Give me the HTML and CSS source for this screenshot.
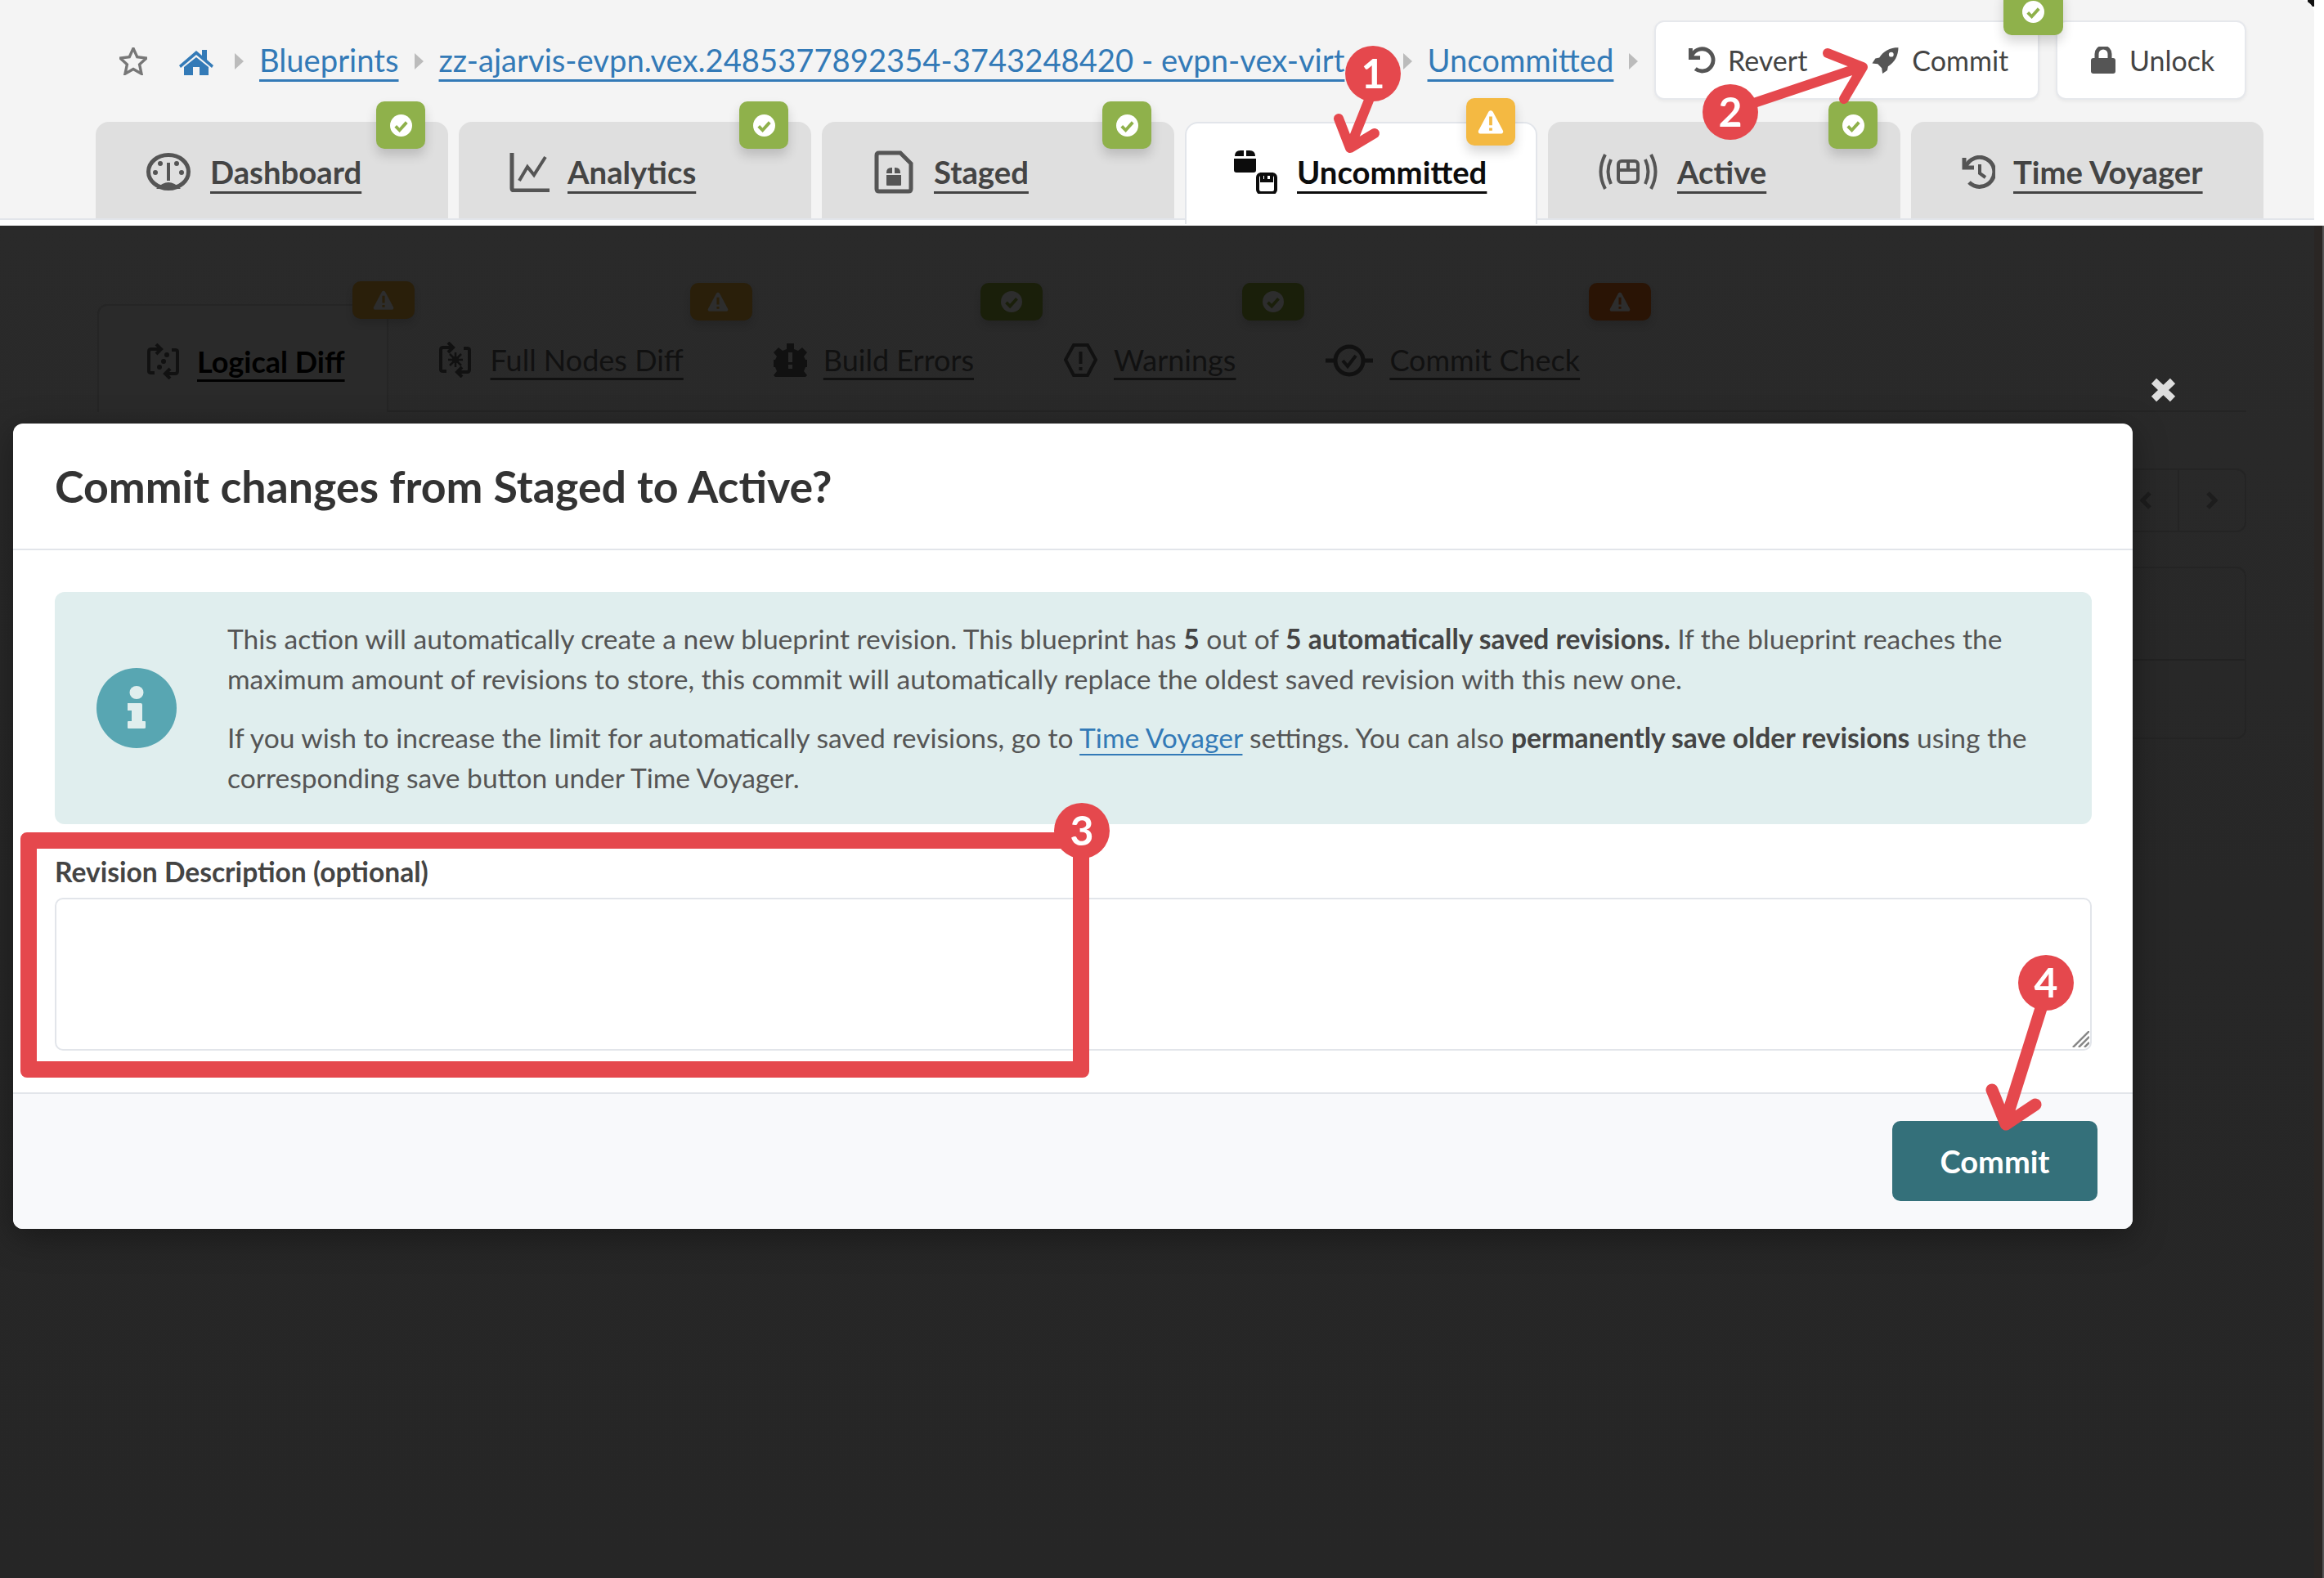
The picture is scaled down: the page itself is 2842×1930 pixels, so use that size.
FILE: index.html
```html
<!DOCTYPE html>
<html lang="en">
<head>
    <meta charset="UTF-8">
    <title>Commit changes</title>
    <link rel="stylesheet" href="styles.css">
</head>
<body>
    <svg class="sprite" width="0" height="0">
        <symbol id="ok" viewBox="0 0 28 28">
            <circle cx="14" cy="14" r="14" fill="currentColor"/>
            <path d="M7 15l5 5 9-10" fill="none" stroke="var(--mark)" stroke-width="4"/>
        </symbol>
        <symbol id="warn" viewBox="0 0 30 28">
            <path d="M15 1c1 0 2 .6 2.500 1.500L29 24c.8 1.700-.2 3.500-2 3.500H3c-1.800 0-2.800-1.800-2-3.500L12.500 2.500C13 1.600 14 1 15 1z" fill="currentColor"/>
            <path d="M15 8v10M15 21v3" fill="none" stroke="var(--mark)" stroke-width="3.500"/>
        </symbol>
    </svg>

    <div class="header-wrap">
        <header class="topbar">
            <div class="top-row">
                <nav class="crumbs">
                    <svg class="star" viewBox="2 2 30 30"><path d="M17 3l4.200 9.400 10 1.100-7.500 6.800 2.100 10.100L17 25.300l-8.800 5.100 2.100-10.100-7.500-6.800 10-1.100z"/></svg>
                    <a class="home" href="#"><svg viewBox="0 0 44 33"><path d="M22 3L1 21l2 3L22 8l19 16 2-3-8-7V2h-6v7z"/><path d="M22 11L7 23v10h11V23h8v10h11V23z"/></svg></a>
                    <span class="caret"></span>
                    <a href="#">Blueprints</a>
                    <span class="caret"></span>
                    <a class="crumb-long" href="#">zz-ajarvis-evpn.vex.2485377892354-3743248420 - evpn-vex-virt</a>
                    <span class="caret"></span>
                    <a href="#">Uncommitted</a>
                    <span class="caret"></span>
                </nav>
                <div class="actions">
                    <div class="btn-group">
                        <button class="top-btn">
                            <svg class="ic-undo" viewBox="0 0 34 34"><path d="M3 2v12h12" class="solid-line"/><path d="M4 13A14 14 0 1 1 9 28" class="line"/></svg>
                            Revert
                        </button>
                        <button class="top-btn">
                            <svg class="ic-rocket" viewBox="0 0 34 34"><path fill-rule="evenodd" d="M33 1C22 1 14 6 9 14l-5 1-4 6 7 1 5 5 1 7 6-4 1-5c8-5 13-13 13-25zM24 7a3 3 0 1 1 0 6 3 3 0 0 1 0-6z"/></svg>
                            Commit
                        </button>
                        <span class="badge ok group-badge"><svg><use href="#ok"/></svg></span>
                    </div>
                    <button class="top-btn solo">
                        <svg class="ic-lock" viewBox="0 0 30 33"><path d="M7 15V9a8 8 0 0 1 16 0v6" class="line"/><rect y="14" width="30" height="19" rx="3"/></svg>
                        Unlock
                    </button>
                </div>
            </div>

            <div class="tabs">
                <a class="tab" href="#">
                    <svg class="ic-gauge" viewBox="0 0 54 46"><ellipse cx="27" cy="23" rx="24.500" ry="20.500" class="line"/><path d="M12 44q15-16 30 0z"/><path d="M27 34V12" class="line thin"/><circle cx="11" cy="24" r="3"/><circle cx="17" cy="13" r="3"/><circle cx="37" cy="13" r="3"/><circle cx="43" cy="24" r="3"/></svg>
                    <span>Dashboard</span>
                    <span class="badge ok"><svg><use href="#ok"/></svg></span>
                </a>
                <a class="tab" href="#">
                    <svg class="ic-chart" viewBox="0 0 49 49"><path d="M3 1v43q0 3 3 3h43" class="line"/><path d="M12 35l10-17 8 10L44 6" class="line thin"/></svg>
                    <span>Analytics</span>
                    <span class="badge ok"><svg><use href="#ok"/></svg></span>
                </a>
                <a class="tab" href="#">
                    <svg class="ic-doc" viewBox="0 0 48 53"><path d="M7 3h25l13 13v31q0 3-3 3H6q-3 0-3-3V6q0-3 3-3z" class="line"/><path d="M15 27q0-6 6-6h1v7h-7zM25 21h1q6 0 6 6v1h-7zM15 30h18v12q0 1-1 1H16q-1 0-1-1z"/></svg>
                    <span>Staged</span>
                    <span class="badge ok"><svg><use href="#ok"/></svg></span>
                </a>
                <a class="tab active" href="#">
                    <svg class="ic-boxes" viewBox="0 0 53 53"><path d="M1 7q0-7 7-7h4v7zM15 0h4q7 0 7 7H15zM0 10h27v14q0 3-3 3H3q-3 0-3-3z"/><rect x="29" y="29" width="22" height="23" rx="4" class="line thin"/><path d="M34 29h12v8H34z M39 29v8" class="line thin"/></svg>
                    <span>Uncommitted</span>
                    <span class="badge warning"><svg><use href="#warn"/></svg></span>
                </a>
                <a class="tab" href="#">
                    <svg class="ic-live" viewBox="0 0 72 46"><path d="M8 2Q-3 23 8 44M15 8q-7 15 0 30M64 2q11 21 0 42M57 8q7 15 0 30" class="line thin"/><rect x="24" y="10" width="24" height="26" rx="4" class="line thin"/><path d="M24 21h24M36 10v11" class="line thin"/></svg>
                    <span>Active</span>
                    <span class="badge ok"><svg><use href="#ok"/></svg></span>
                </a>
                <a class="tab" href="#">
                    <svg class="ic-history" viewBox="0 0 41 41"><path d="M3 3v12h12" class="solid-line"/><path d="M5 14A18 18 0 1 1 9 33" class="line"/><path d="M22 11v11l7 5" class="line thin"/></svg>
                    <span>Time Voyager</span>
                </a>
            </div>
        </header>
    </div>

    <main class="dim">
        <div class="dim-page">
            <div class="ghost-tabs">
                <a class="ghost-tab current" href="#">
                    <svg class="gi-diff" viewBox="0 0 39 44"><path d="M15 7H5q-3 0-3 3v24q0 2 3 2h4M24 37h10q3 0 3-3V10q0-2-3-2h-4M11 1l6 6-6 6M28 31l-6 6 6 6" class="line thin"/><circle cx="24" cy="14" r="3"/><circle cx="20" cy="22" r="3"/><circle cx="15" cy="29" r="3"/></svg>
                    <span class="ghost-label">Logical Diff<span class="badge g-warn"><svg><use href="#warn"/></svg></span></span>
                </a>
                <a class="ghost-tab" href="#">
                    <svg class="gi-diff" viewBox="0 0 39 44"><path d="M15 7H5q-3 0-3 3v24q0 2 3 2h4M24 37h10q3 0 3-3V10q0-2-3-2h-4M11 1l6 6-6 6M28 31l-6 6 6 6" class="line thin"/><circle cx="20" cy="22" r="4"/><path d="M20 13v18M11 22h18M13 15l14 14M27 15L13 29" class="line hair"/></svg>
                    <span class="ghost-label">Full Nodes Diff<span class="badge g-warn"><svg><use href="#warn"/></svg></span></span>
                </a>
                <a class="ghost-tab" href="#">
                    <svg class="gi-gear" viewBox="0 0 41 41"><path fill-rule="evenodd" d="M16 0h9v7l5 2 5-4 6 6-4 5 2 4h2v9h-2l-2 5 4 5-6 6-5-4-5 2v-2h-9v2l-5-2-5 4-6-6 4-5-2-5H0v-9h2l2-4-4-5 6-6 5 4 5-2zM18 11v12h5V11zM18 26v5h5v-5z"/></svg>
                    <span class="ghost-label">Build Errors<span class="badge g-ok"><svg><use href="#ok"/></svg></span></span>
                </a>
                <a class="ghost-tab" href="#">
                    <svg class="gi-hex" viewBox="0 0 41 41"><path d="M12 2h17l10 18-10 19H12L2 20z" class="line thin"/><path d="M20.500 10v15M20.500 29v4" class="line thin"/></svg>
                    <span class="ghost-label">Warnings<span class="badge g-ok"><svg><use href="#ok"/></svg></span></span>
                </a>
                <a class="ghost-tab" href="#">
                    <svg class="gi-check" viewBox="0 0 58 41"><circle cx="29" cy="21" r="17" class="line"/><path d="M0 21h10M48 21h10" class="line"/><path d="M21 21l6 7 10-13" class="line thin"/></svg>
                    <span class="ghost-label">Commit Check<span class="badge g-err"><svg><use href="#warn"/></svg></span></span>
                </a>
            </div>
            <div class="pager">
                <span class="pager-cell"><svg viewBox="0 0 14 22"><path d="M12 2L3 11l9 9" class="line"/></svg></span>
                <span class="pager-cell"><svg viewBox="0 0 14 22"><path d="M2 2l9 9-9 9" class="line"/></svg></span>
            </div>
            <div class="ghost-panel">
                <div class="ghost-panel-row"></div>
                <div class="ghost-panel-row"></div>
            </div>
        </div>
        <div class="edge"></div>

        <svg class="close-x" viewBox="0 0 33 32"><path d="M5 5l23 22M28 5L5 27"/></svg>

        <section class="modal">
            <div class="modal-head">
                <h2>Commit changes from Staged to Active?</h2>
            </div>
            <div class="modal-body">
                <div class="info">
                    <svg class="info-ic" viewBox="0 0 98 98"><circle cx="49" cy="49" r="49"/><ellipse class="glyph" cx="49" cy="30" rx="8.500" ry="8"/><path class="glyph" d="M38 43h16q2 0 2 2v20h3q1 0 1 1v7q0 1-2 1H39q-1 0-1-1v-7q0-1 1-1h4V52h-5z"/></svg>
                    <div class="info-text">
                        <p>This action will automatically create a new blueprint revision. This blueprint has <strong>5</strong> out of <strong>5 automatically saved revisions.</strong> If the blueprint reaches the maximum amount of revisions to store, this commit will automatically replace the oldest saved revision with this new one.</p>
                        <p>If you wish to increase the limit for automatically saved revisions, go to <a href="#">Time Voyager</a> settings. You can also <strong>permanently save older revisions</strong> using the corresponding save button under Time Voyager.</p>
                    </div>
                </div>
                <label class="field-label" for="revDesc">Revision Description (optional)</label>
                <div class="field">
                    <textarea id="revDesc"></textarea>
                    <svg class="grip" viewBox="0 0 21 20"><path d="M1 20L21 0M8 20L21 7M15 20l6-6"/></svg>
                </div>
            </div>
            <div class="modal-foot">
                <button class="primary">Commit</button>
            </div>
        </section>
    </main>

    <!-- red callouts drawn on top of the screenshot -->
    <div class="callout-box"></div>
    <svg class="callouts" viewBox="0 0 2842 1930">
        <path d="M1675 120L1651 180M1637 145l14 36 30-18"/>
        <path d="M2130 131L2276 82M2235 65l43 17-23 39"/>
        <path class="heavy" d="M2497 1230L2453 1370M2436 1333l17 42 36-24"/>
        <circle cx="1679" cy="90" r="34"/>
        <circle cx="2116" cy="137" r="34"/>
        <circle cx="1323" cy="1016" r="34"/>
        <circle cx="2502" cy="1202" r="34"/>
        <text x="1679" y="108">1</text>
        <text x="2116" y="155">2</text>
        <text x="1323" y="1034">3</text>
        <text x="2502" y="1220">4</text>
    </svg>
</body>
</html>
```

FILE: styles.css
```css
* {
    box-sizing: border-box;
}
body {
    margin: 0;
    width: 2842px;
    height: 1930px;
    overflow: hidden;
    position: relative;
    background: #fff;
    font-family: Lato, "Open Sans", sans-serif;
    color: #555;
}
a {
    color: inherit;
}
.sprite {
    position: absolute;
}
.line {
    fill: none;
    stroke: currentColor;
    stroke-width: 5;
}
.line.thin {
    stroke-width: 4;
}
.line.hair {
    stroke-width: 2.5;
}
.solid-line {
    fill: none;
    stroke: currentColor;
    stroke-width: 5;
}

/* top bar */
.header-wrap {
    width: 2830px;
    height: 276px;
    position: relative;
}
.header-wrap::before {
    content: "";
    position: absolute;
    top: 0;
    right: 0;
    width: 8px;
    height: 8px;
    background: #111;
}
.topbar {
    position: relative;
    height: 269px;
    background: #f4f4f4;
    border-bottom: 2px solid #e2e5ea;
    border-top-right-radius: 16px;
}
.top-row {
    display: flex;
    justify-content: space-between;
    align-items: center;
    height: 122px;
    padding: 25px 83px 0 146px;
}
.crumbs {
    display: flex;
    align-items: center;
    gap: 17px;
    font-size: 38.200px;
    color: #337ab7;
    margin-top: 3px;
}
.crumbs a {
    display: block;
    height: 62px;
    padding-top: 2px;
    text-decoration: underline;
    text-decoration-thickness: 3px;
    text-underline-offset: 9px;
    line-height: 54px;
    white-space: nowrap;
}
.star {
    width: 34px;
    height: 34px;
    margin-right: 21px;
    fill: none;
    stroke: #777;
    stroke-width: 3;
}
.crumbs .home {
    height: 33px;
    padding-top: 0;
    margin-right: 6px;
}
.home svg {
    width: 44px;
    height: 33px;
    display: block;
    fill: #337ab7;
}
.caret {
    width: 0;
    height: 0;
    border-left: 11px solid #bbb;
    border-top: 10px solid transparent;
    border-bottom: 10px solid transparent;
    margin: 0 2px;
}
.crumbs .crumb-long {
    width: 1160px;
}
.actions {
    display: flex;
    gap: 20px;
}
.btn-group {
    position: relative;
    display: flex;
    gap: 79px;
    width: 471px;
    height: 97px;
    padding: 0 39px 0 39px;
    background: #fff;
    border: 2px solid #e6e8ec;
    border-radius: 12px;
    box-shadow: 0 2px 4px rgba(0, 0, 0, .05);
}
.top-btn {
    display: flex;
    align-items: center;
    gap: 15px;
    padding: 0;
    border: 0;
    background: none;
    font: 34px Lato, sans-serif;
    color: #444;
}
.top-btn svg {
    flex: none;
    fill: #555;
    color: #555;
    height: 33px;
}
.top-btn.solo {
    width: 233px;
    height: 97px;
    gap: 17px;
    padding: 0 0 0 41px;
    background: #fff;
    border: 2px solid #e6e8ec;
    border-radius: 12px;
    box-shadow: 0 2px 4px rgba(0, 0, 0, .05);
}
.ic-undo, .ic-rocket {
    width: 34px;
}
.ic-lock {
    width: 30px;
}

.tabs {
    display: flex;
    gap: 13px;
    margin-top: 27px;
    padding-left: 117px;
}
.tab {
    position: relative;
    display: flex;
    align-items: center;
    gap: 24px;
    width: 431px;
    height: 118px;
    padding: 4px 0 0 62px;
    background: #dfdfdf;
    border-radius: 16px 16px 0 0;
    font-size: 38.300px;
    font-weight: 700;
    color: #444;
    text-decoration: none;
}
.tab span:not(.badge) {
    text-decoration: underline;
    text-decoration-thickness: 3px;
    text-underline-offset: 9px;
}
.tab svg {
    flex: none;
    color: #555;
    fill: #555;
}
.tab.active {
    height: 125px;
    padding: 0 0 5px 58px;
    background: #fff;
    border: 2px solid #e2e5ea;
    border-bottom: 0;
    color: #0c0c0c;
}
.tab.active svg {
    color: #0c0c0c;
    fill: #0c0c0c;
}
.ic-gauge { width: 54px; height: 46px; }
.ic-chart { width: 49px; height: 49px; margin-right: -2px; }
.ic-doc { width: 48px; height: 53px; margin: 0 1px 0 2px; }
.ic-boxes { width: 53px; height: 53px; }
.ic-live { width: 72px; height: 46px; }
.ic-history { width: 41px; height: 41px; margin-right: -2px; }

.badge {
    position: absolute;
    top: -25px;
    right: 28px;
    display: flex;
    align-items: center;
    justify-content: center;
    width: 60px;
    height: 58px;
    border-radius: 10px;
    box-shadow: 0 8px 14px rgba(0, 0, 0, .16);
}
.tab .badge svg,
.group-badge svg {
    width: 27px;
    height: 27px;
    fill: none;
    color: #fff;
}
.tab.active .badge svg {
    width: 32px;
    height: 30px;
    color: #fff;
    fill: none;
}
.badge.ok {
    background: #8fb14b;
    --mark: #8fb14b;
}
.badge.warning {
    top: -31px;
    right: 25px;
    background: #f4b942;
    --mark: #f4b942;
}
.top-btn + .group-badge,
.group-badge {
    top: -42px;
    right: -31px;
    width: 73px;
}

/* dimmed page behind the dialog */
.dim {
    display: flex;
    height: 1654px;
    position: relative;
}
.dim-page {
    flex: 1;
    padding: 96px 83px 0 119px;
    background: linear-gradient(#2a2a2a, #272727 50%, #262626);
}
.edge {
    width: 12px;
    background: linear-gradient(90deg, #2a2624 83%, #555 83%);
}
.ghost-tabs {
    display: flex;
    height: 132px;
    border-bottom: 2px solid #242424;
}
.ghost-tab {
    display: flex;
    align-items: center;
    gap: 20px;
    padding: 6px 51px 0 59px;
    font-size: 36px;
    color: #111;
    text-decoration: none;
}
.ghost-tab.current {
    height: 132px;
    gap: 22px;
    margin: 0 7px -2px 0;
    border: 2px solid #252525;
    border-bottom: 0;
    border-radius: 12px 0 0 0;
    background: #2a2a2a;
    font-weight: 700;
    color: #000;
}
.ghost-tab svg {
    flex: none;
    color: #111;
    fill: #111;
}
.ghost-tab:nth-child(2) svg {
    margin: 0 4px 0 -4px;
}
.ghost-label {
    position: relative;
    text-decoration: underline;
    text-decoration-thickness: 3px;
    text-underline-offset: 8px;
}
.gi-diff { width: 39px; height: 44px; }
.gi-gear { width: 41px; height: 41px; }
.gi-hex { width: 41px; height: 41px; }
.gi-check { width: 58px; height: 41px; }
.ghost-label .badge {
    top: -72px;
    left: calc(100% + 8px);
    right: auto;
    width: 76px;
    height: 46px;
    box-shadow: 0 6px 10px rgba(0, 0, 0, .12);
}
.current .ghost-label .badge {
    top: -76px;
    left: calc(100% + 9px);
}
.ghost-tab .ghost-label .badge svg {
    width: 26px;
    height: 26px;
    color: #2d2d2d;
    fill: none;
}
.badge.g-warn { background: #2a1f0a; --mark: #2a1f0a; }
.badge.g-ok { background: #1a1f0a; --mark: #1a1f0a; }
.badge.g-err { background: #2a1405; --mark: #2a1405; left: calc(100% + 11px); }

.pager {
    display: flex;
    justify-content: flex-end;
    margin-top: 69px;
}
.pager-cell {
    display: flex;
    align-items: center;
    justify-content: center;
    width: 82px;
    height: 78px;
    border: 2px solid #242424;
    border-left: 0;
    border-radius: 0 12px 12px 0;
}
.pager-cell:first-child {
    border-radius: 12px 0 0 12px;
    border-left: 2px solid #242424;
    border-right: 2px solid #242424;
}
.pager-cell svg {
    width: 14px;
    height: 22px;
    color: #1d1d1d;
}
.ghost-panel {
    height: 211px;
    margin-top: 42px;
    border: 2px solid #242424;
    border-radius: 12px;
}
.ghost-panel-row {
    height: 113px;
}
.ghost-panel-row:first-child {
    border-bottom: 2px solid #222;
}
.ghost-panel-row:last-child {
    height: 94px;
}
.close-x {
    position: absolute;
    top: 185px;
    left: 2629px;
    width: 33px;
    height: 32px;
    fill: none;
    stroke: #ddd;
    stroke-width: 9;
}

/* dialog */
.modal {
    position: absolute;
    top: 242px;
    left: 16px;
    width: 2592px;
    height: 985px;
    display: flex;
    flex-direction: column;
    background: #fff;
    border-radius: 12px;
    overflow: hidden;
    box-shadow: 0 10px 40px rgba(0, 0, 0, .35);
}
.modal-head {
    display: flex;
    align-items: center;
    height: 155px;
    padding: 0 51px;
    border-bottom: 2px solid #e2e5ea;
}
.modal-head h2 {
    margin: 0 0 2px;
    font-size: 53.700px;
    font-weight: 700;
    color: #333;
}
.modal-body {
    flex: 1;
    padding: 51px 50px 0 51px;
}
.info {
    display: flex;
    align-items: center;
    gap: 62px;
    height: 284px;
    padding: 0 60px 0 51px;
    background: #e0eeee;
    border-radius: 12px;
    font-size: 33.600px;
    line-height: 48.500px;
    color: #555;
}
.info-ic {
    flex: none;
    width: 98px;
    height: 98px;
    fill: #58a6b2;
}
.info-ic .glyph {
    fill: #e0eeee;
}
.info p {
    margin: 0 0 24px;
}
.info p:last-child {
    margin-bottom: 0;
}
.info strong {
    color: #444;
}
.info a {
    color: #337ab7;
    text-decoration: underline;
    text-decoration-thickness: 2px;
    text-underline-offset: 7px;
}
.field-label {
    display: block;
    margin-top: 34px;
    font-size: 33.600px;
    line-height: 48px;
    font-weight: 700;
    color: #444;
}
.field {
    position: relative;
    margin-top: 8px;
}
.field textarea {
    display: block;
    width: 100%;
    height: 187px;
    border: 2px solid #e2e5ea;
    border-radius: 10px;
    resize: none;
}
.grip {
    position: absolute;
    right: 3px;
    bottom: 4px;
    width: 21px;
    height: 20px;
    fill: none;
    stroke: #888;
    stroke-width: 2.500;
}
.modal-foot {
    display: flex;
    justify-content: flex-end;
    height: 167px;
    padding: 33px 43px 0 0;
    background: #f8f9fb;
    border-top: 2px solid #e2e5ea;
}
.primary {
    width: 251px;
    height: 98px;
    border: 0;
    border-radius: 10px;
    background: #34707a;
    color: #fff;
    font: 700 38px Lato, sans-serif;
}

/* annotations */
.callout-box {
    position: absolute;
    top: 1018px;
    left: 25px;
    width: 1307px;
    height: 300px;
    border: 20px solid #e5484d;
    border-radius: 8px;
}
.callouts {
    position: absolute;
    top: 0;
    left: 0;
    width: 2842px;
    height: 1930px;
    pointer-events: none;
}
.callouts path {
    fill: none;
    stroke: #e5484d;
    stroke-width: 12;
    stroke-linecap: round;
    stroke-linejoin: round;
}
.callouts path.heavy {
    stroke-width: 15;
}
.callouts circle {
    fill: #e5484d;
}
.callouts text {
    font: 700 50px Lato, sans-serif;
    fill: #fff;
    text-anchor: middle;
}
```
